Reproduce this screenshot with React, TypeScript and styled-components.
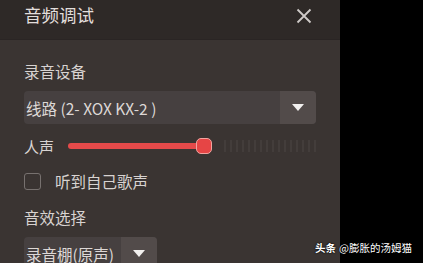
import React from "react";
import styled, { createGlobalStyle } from "styled-components";

const GlobalStyle = createGlobalStyle`
  html, body {
    margin: 0;
    padding: 0;
    background: #000;
    width: 423px;
    height: 263px;
    overflow: hidden;
  }
  body {
    font-family: "Noto Sans CJK SC", "Noto Sans", sans-serif;
  }
`;

const Screen = styled.div`
  position: relative;
  width: 423px;
  height: 263px;
  display: flex;
  background: #000;
  overflow: hidden;
`;

const Panel = styled.div`
  width: 340px;
  height: 263px;
  display: flex;
  flex-direction: column;
  background: #3a3432;
`;

const Header = styled.div`
  height: 40px;
  flex-shrink: 0;
  display: flex;
  align-items: center;
  justify-content: space-between;
  padding: 0 27px 0 24px;
  background: #2e2927;
  border-bottom: 1px solid #2a2524;
  box-sizing: border-box;
`;

const Title = styled.h1`
  margin: 0;
  margin-top: -9px;
  font-size: 17.5px;
  line-height: 22px;
  font-weight: 400;
  color: #e2dedc;
`;

const CloseButton = styled.div`
  width: 18px;
  height: 18px;
  margin-top: -7px;
  display: flex;
  align-items: center;
  justify-content: center;
`;

const Body = styled.div`
  display: flex;
  flex-direction: column;
  padding: 21px 24px 0 24px;
`;

const Label = styled.div<{ $top?: number }>`
  font-size: 15.5px;
  line-height: 20px;
  color: #d8d3d1;
  margin-top: ${(p) => p.$top ?? 0}px;
`;

const Select = styled.div<{ $width: number }>`
  width: ${(p) => p.$width}px;
  height: 33px;
  display: flex;
  border-radius: 4px;
  overflow: hidden;
  background: #464040;
  margin-top: 10px;
`;

const SelectText = styled.div`
  flex: 1;
  display: flex;
  align-items: center;
  padding-left: 2px;
  font-size: 15.5px;
  color: #ddd8d6;
  white-space: nowrap;
`;

const SelectArrow = styled.div`
  width: 36px;
  display: flex;
  align-items: center;
  justify-content: center;
  background: #524b4a;
`;

const Triangle = styled.div`
  width: 0;
  height: 0;
  border-left: 6px solid transparent;
  border-right: 6px solid transparent;
  border-top: 7px solid #f2f0ef;
`;

const SliderRow = styled.div`
  display: flex;
  align-items: center;
  height: 24px;
  margin-top: 10px;
`;

const SliderLabel = styled.div`
  width: 44px;
  font-size: 15px;
  color: #d8d3d1;
`;

const Track = styled.div`
  flex: 1;
  position: relative;
  height: 16px;
  display: flex;
  align-items: center;
`;

const Fill = styled.div`
  height: 6px;
  border-radius: 3px;
  background: #e54a4a;
`;

const Thumb = styled.div`
  position: absolute;
  top: 0;
  width: 16px;
  height: 16px;
  border-radius: 5px;
  background: #e64545;
  border: 1px solid #f1a4a0;
  box-sizing: border-box;
  transform: translateX(-8px);
`;

const Ticks = styled.div`
  position: absolute;
  right: 0;
  top: 2px;
  height: 12px;
  display: flex;
  gap: 4px;
`;

const Tick = styled.div`
  width: 2px;
  height: 12px;
  background: #433d3b;
`;

const CheckRow = styled.label`
  display: flex;
  align-items: center;
  gap: 14px;
  margin-top: 12px;
  font-size: 15.5px;
  line-height: 22px;
  color: #d8d3d1;
`;

const CheckBox = styled.span`
  width: 17px;
  height: 17px;
  border: 1.5px solid #77716f;
  border-radius: 3px;
  box-sizing: border-box;
`;

const Watermark = styled.div`
  position: absolute;
  left: 315px;
  top: 240px;
  font-size: 10.5px;
  line-height: 16px;
  color: #fff;
  text-shadow: 0 0 2px #000, 0 0 1px #000;
  white-space: nowrap;
`;

const Bold = styled.span`
  font-weight: 700;
  margin-right: 3px;
`;

export default function App(): JSX.Element {
  const value = 0.55;
  return (
    <>
      <GlobalStyle />
      <Screen>
        <Panel>
          <Header>
            <Title>音频调试</Title>
            <CloseButton>
              <svg width="16" height="16" viewBox="0 0 16 16">
                <path d="M1.5 1.5 L14.5 14.5 M14.5 1.5 L1.5 14.5" stroke="#cfcac8" strokeWidth="1.8" />
              </svg>
            </CloseButton>
          </Header>
          <Body>
            <Label>录音设备</Label>
            <Select $width={292}>
              <SelectText>线路 (2- XOX KX-2 )</SelectText>
              <SelectArrow>
                <Triangle />
              </SelectArrow>
            </Select>
            <SliderRow>
              <SliderLabel>人声</SliderLabel>
              <Track>
                <Fill style={{ width: `${value * 100}%` }} />
                <Thumb style={{ left: `${value * 100}%` }} />
                <Ticks>
                  {Array.from({ length: 16 }).map((_, i) => (
                    <Tick key={i} />
                  ))}
                </Ticks>
              </Track>
            </SliderRow>
            <CheckRow>
              <CheckBox />
              听到自己歌声
            </CheckRow>
            <Label $top={15}>音效选择</Label>
            <Select $width={133}>
              <SelectText>录音棚(原声)</SelectText>
              <SelectArrow>
                <Triangle />
              </SelectArrow>
            </Select>
          </Body>
        </Panel>
        <Watermark>
          <Bold>头条</Bold>@膨胀的汤姆猫
        </Watermark>
      </Screen>
    </>
  );
}
